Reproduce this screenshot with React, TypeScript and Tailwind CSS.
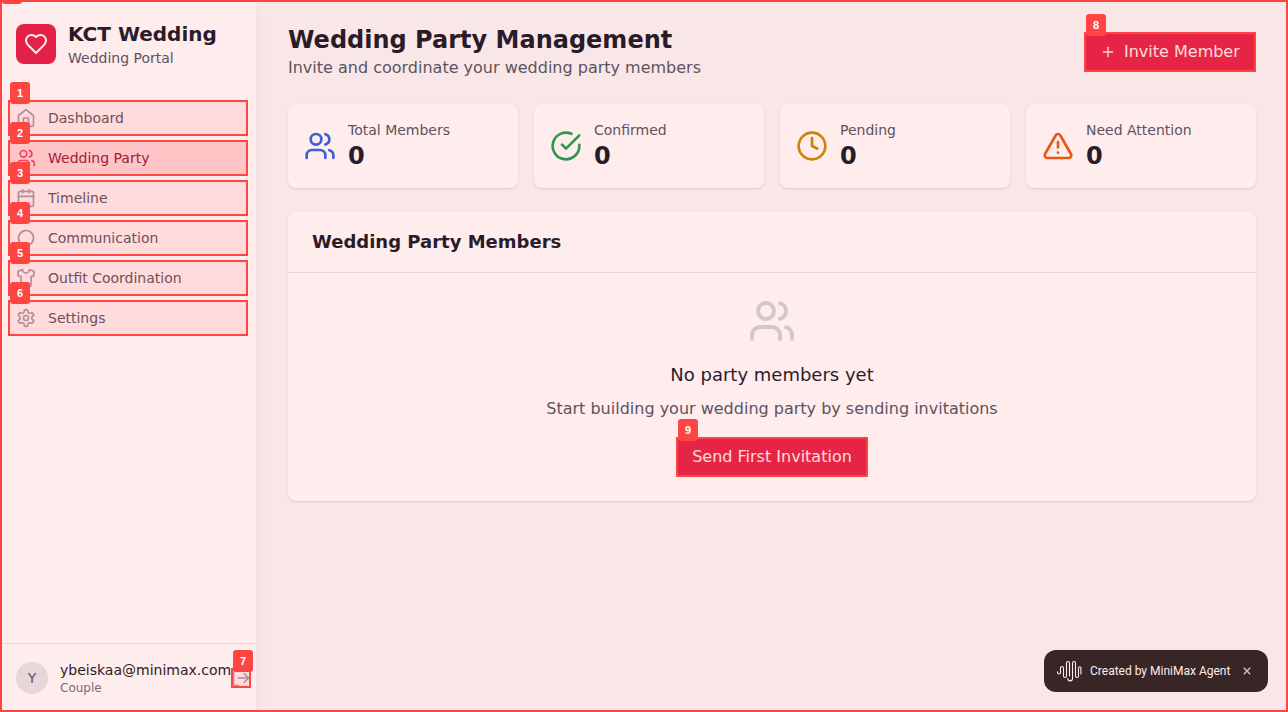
import React from "react";

type IconProps = { className?: string; children?: React.ReactNode };

function Icon({ className, children }: IconProps) {
  return (
    <svg viewBox="0 0 24 24" fill="none" stroke="currentColor" strokeWidth="2" strokeLinecap="round" strokeLinejoin="round" className={className}>
      {children}
    </svg>
  );
}

const home = (
  <>
    <path d="m3 9 9-7 9 7v11a2 2 0 0 1-2 2H5a2 2 0 0 1-2-2z" />
    <path d="M9 22V12h6v10" />
  </>
);
const users = (
  <>
    <path d="M16 21v-2a4 4 0 0 0-4-4H6a4 4 0 0 0-4 4v2" />
    <circle cx="9" cy="7" r="4" />
    <path d="M22 21v-2a4 4 0 0 0-3-3.87" />
    <path d="M16 3.13a4 4 0 0 1 0 7.75" />
  </>
);
const calendar = (
  <>
    <path d="M8 2v4" />
    <path d="M16 2v4" />
    <rect width="18" height="18" x="3" y="4" rx="2" />
    <path d="M3 10h18" />
  </>
);
const message = <path d="M7.9 20A9 9 0 1 0 4 16.1L2 22Z" />;
const shirt = (
  <path d="M20.38 3.46 16 2a4 4 0 0 1-8 0L3.62 3.46a2 2 0 0 0-1.34 2.23l.58 3.47a1 1 0 0 0 .99.84H6v10c0 1.1.9 2 2 2h8a2 2 0 0 0 2-2V10h2.15a1 1 0 0 0 .99-.84l.58-3.47a2 2 0 0 0-1.34-2.23z" />
);
const settings = (
  <>
    <path d="M12.22 2h-.44a2 2 0 0 0-2 2v.18a2 2 0 0 1-1 1.73l-.43.25a2 2 0 0 1-2 0l-.15-.08a2 2 0 0 0-2.73.73l-.22.38a2 2 0 0 0 .73 2.73l.15.1a2 2 0 0 1 1 1.72v.51a2 2 0 0 1-1 1.74l-.15.09a2 2 0 0 0-.73 2.73l.22.38a2 2 0 0 0 2.73.73l.15-.08a2 2 0 0 1 2 0l.43.25a2 2 0 0 1 1 1.73V20a2 2 0 0 0 2 2h.44a2 2 0 0 0 2-2v-.18a2 2 0 0 1 1-1.73l.43-.25a2 2 0 0 1 2 0l.15.08a2 2 0 0 0 2.73-.73l.22-.39a2 2 0 0 0-.73-2.73l-.15-.08a2 2 0 0 1-1-1.74v-.5a2 2 0 0 1 1-1.74l.15-.09a2 2 0 0 0 .73-2.73l-.22-.38a2 2 0 0 0-2.73-.73l-.15.08a2 2 0 0 1-2 0l-.43-.25a2 2 0 0 1-1-1.73V4a2 2 0 0 0-2-2z" />
    <circle cx="12" cy="12" r="3" />
  </>
);

const nav = [
  { label: "Dashboard", icon: home },
  { label: "Wedding Party", icon: users, active: true },
  { label: "Timeline", icon: calendar },
  { label: "Communication", icon: message },
  { label: "Outfit Coordination", icon: shirt },
  { label: "Settings", icon: settings },
];

const stats = [
  {
    label: "Total Members",
    iconClass: "size-8 text-[#2563eb]",
    icon: users,
  },
  {
    label: "Confirmed",
    iconClass: "size-8 text-[#16a34a]",
    icon: (
      <>
        <path d="M22 11.08V12a10 10 0 1 1-5.93-9.14" />
        <path d="m9 11 3 3L22 4" />
      </>
    ),
  },
  {
    label: "Pending",
    iconClass: "size-8 text-[#ca8a04]",
    icon: (
      <>
        <circle cx="12" cy="12" r="10" />
        <path d="M12 6v6l4 2" />
      </>
    ),
  },
  {
    label: "Need Attention",
    iconClass: "size-8 text-[#ea580c]",
    icon: (
      <>
        <path d="m21.73 18-8-14a2 2 0 0 0-3.48 0l-8 14A2 2 0 0 0 4 21h16a2 2 0 0 0 1.73-3" />
        <path d="M12 9v4" />
        <path d="M12 17h.01" />
      </>
    ),
  },
];

/* Highlight frame with a numbered tag, laid over its positioned parent. */
function Mark({ n }: { n: number }) {
  return (
    <span className="pointer-events-none absolute inset-0 z-20 border-2 border-[#ff4444] bg-[#ff4444]/10">
      <span className="absolute -top-5 left-0 flex h-[22px] w-5 items-center justify-center rounded-[3px] bg-[#ff4444] font-['Liberation_Sans',sans-serif] text-[11px] font-bold leading-none text-white">
        {n}
      </span>
    </span>
  );
}

export default function App() {
  return (
    <div className="relative flex h-[712px] w-[1288px] overflow-hidden bg-[#f9fafb] font-['DejaVu_Sans',sans-serif] text-[#111827]">
      <aside className="flex w-64 shrink-0 flex-col bg-white shadow-lg">
        <div className="flex items-center gap-3 px-4 pt-5">
          <div className="flex size-10 items-center justify-center rounded-lg bg-[#e11d48] text-white">
            <Icon className="size-6">
              <path d="M19 14c1.49-1.46 3-3.21 3-5.5A5.5 5.5 0 0 0 16.5 3c-1.76 0-3 .5-4.5 2-1.5-1.5-2.74-2-4.5-2A5.5 5.5 0 0 0 2 8.5c0 2.3 1.5 4.05 3 5.5l7 7Z" />
            </Icon>
          </div>
          <div>
            <h1 className="text-xl font-bold leading-7">KCT Wedding</h1>
            <p className="text-sm text-[#4b5563]">Wedding Portal</p>
          </div>
        </div>
        <nav className="mt-8 flex flex-1 flex-col gap-1 px-2">
          {nav.map((item, i) => (
            <a
              key={item.label}
              className={
                item.active
                  ? "relative flex h-9 items-center gap-3 rounded-md bg-[#ffe4e6] px-2 text-sm text-[#881337]"
                  : "relative flex h-9 items-center gap-3 rounded-md px-2 text-sm text-[#4b5563]"
              }
            >
              <Icon className={item.active ? "size-5 text-[#f43f5e]" : "size-5 text-[#9ca3af]"}>{item.icon}</Icon>
              {item.label}
              <Mark n={i + 1} />
            </a>
          ))}
        </nav>
        <div className="flex h-[69px] items-center border-t border-[#e5e7eb] pl-4">
          <div className="flex size-8 shrink-0 items-center justify-center rounded-full bg-[#e5e7eb] text-sm text-[#4b5563]">Y</div>
          <div className="ml-3">
            <p className="text-sm leading-5 text-[#111827]">ybeiskaa@minimax.com</p>
            <p className="text-xs leading-4 text-[#6b7280]">Couple</p>
          </div>
          <button className="relative size-5 shrink-0 text-[#9ca3af]">
            <Icon className="size-5">
              <path d="M9 21H5a2 2 0 0 1-2-2V5a2 2 0 0 1 2-2h4" />
              <path d="m16 17 5-5-5-5" />
              <path d="M21 12H9" />
            </Icon>
            <Mark n={7} />
          </button>
        </div>
      </aside>

      <main className="flex-1 px-8 pt-6">
        <header className="flex items-center justify-between">
          <div>
            <h2 className="text-2xl font-bold leading-8">Wedding Party Management</h2>
            <p className="text-base text-[#4b5563]">Invite and coordinate your wedding party members</p>
          </div>
          <button className="relative flex h-10 w-[172px] items-center rounded-md bg-[#e11d48] pl-4 text-base text-white">
            <Icon className="mr-2 size-4">
              <path d="M5 12h14" />
              <path d="M12 5v14" />
            </Icon>
            Invite Member
            <Mark n={8} />
          </button>
        </header>

        <section className="mt-6 grid grid-cols-4 gap-4">
          {stats.map((s) => (
            <div key={s.label} className="flex h-[84px] items-center gap-3 rounded-lg bg-white px-4 shadow-sm">
              <Icon className={s.iconClass}>{s.icon}</Icon>
              <div>
                <p className="text-sm leading-5 text-[#4b5563]">{s.label}</p>
                <p className="text-2xl font-bold leading-8">0</p>
              </div>
            </div>
          ))}
        </section>

        <section className="mt-6 h-[289px] rounded-lg bg-white shadow-sm">
          <div className="border-b border-[#e5e7eb] px-6 py-4">
            <h3 className="text-lg font-semibold leading-7">Wedding Party Members</h3>
          </div>
          <div className="flex flex-col items-center pt-6">
            <Icon className="size-12 text-[#d1d5db]">{users}</Icon>
            <h4 className="mt-4 text-lg leading-7">No party members yet</h4>
            <p className="mt-2 text-base text-[#4b5563]">Start building your wedding party by sending invitations</p>
            <button className="relative mt-4 flex h-10 w-48 items-center justify-center rounded-md bg-[#e11d48] text-base text-white">
              Send First Invitation
              <Mark n={9} />
            </button>
          </div>
        </section>
      </main>

      <div className="absolute bottom-5 right-5 flex h-[42px] w-56 items-center rounded-xl bg-[#222324] pl-3 font-['Roboto',sans-serif] text-xs text-white">
        <svg viewBox="0 0 26 24" className="h-6 w-[26px] shrink-0" fill="none" stroke="currentColor" strokeWidth="1.1" strokeLinecap="round">
          <path d="M1.5 12.7v.8a1.5 1.5 0 0 0 3 0V9a1.5 1.5 0 0 1 3 0v8a1.5 1.5 0 0 0 3 0V4a1.5 1.5 0 0 1 3 0v13" />
          <path d="M11.8 19.5a1.8 1.8 0 0 0 4.7 0V4a1.5 1.5 0 0 1 3 0v13a1.5 1.5 0 0 0 3 0V9a1.2 1.2 0 0 1 2.4 0v6" />
        </svg>
        <span className="ml-2 w-[141px] whitespace-nowrap">Created by MiniMax Agent</span>
        <svg viewBox="0 0 8 8" className="ml-3 size-2 text-[#d1d5db]" fill="none" stroke="currentColor" strokeWidth="1.3">
          <path d="M.8.8 7.2 7.2M7.2.8.8 7.2" />
        </svg>
      </div>

      <div className="pointer-events-none absolute inset-0 z-10 border-2 border-[#ff4444] bg-[#ff4444]/10">
        <span className="absolute -top-5 left-0 h-[22px] w-5 rounded-[3px] bg-[#ff4444]" />
      </div>
    </div>
  );
}
